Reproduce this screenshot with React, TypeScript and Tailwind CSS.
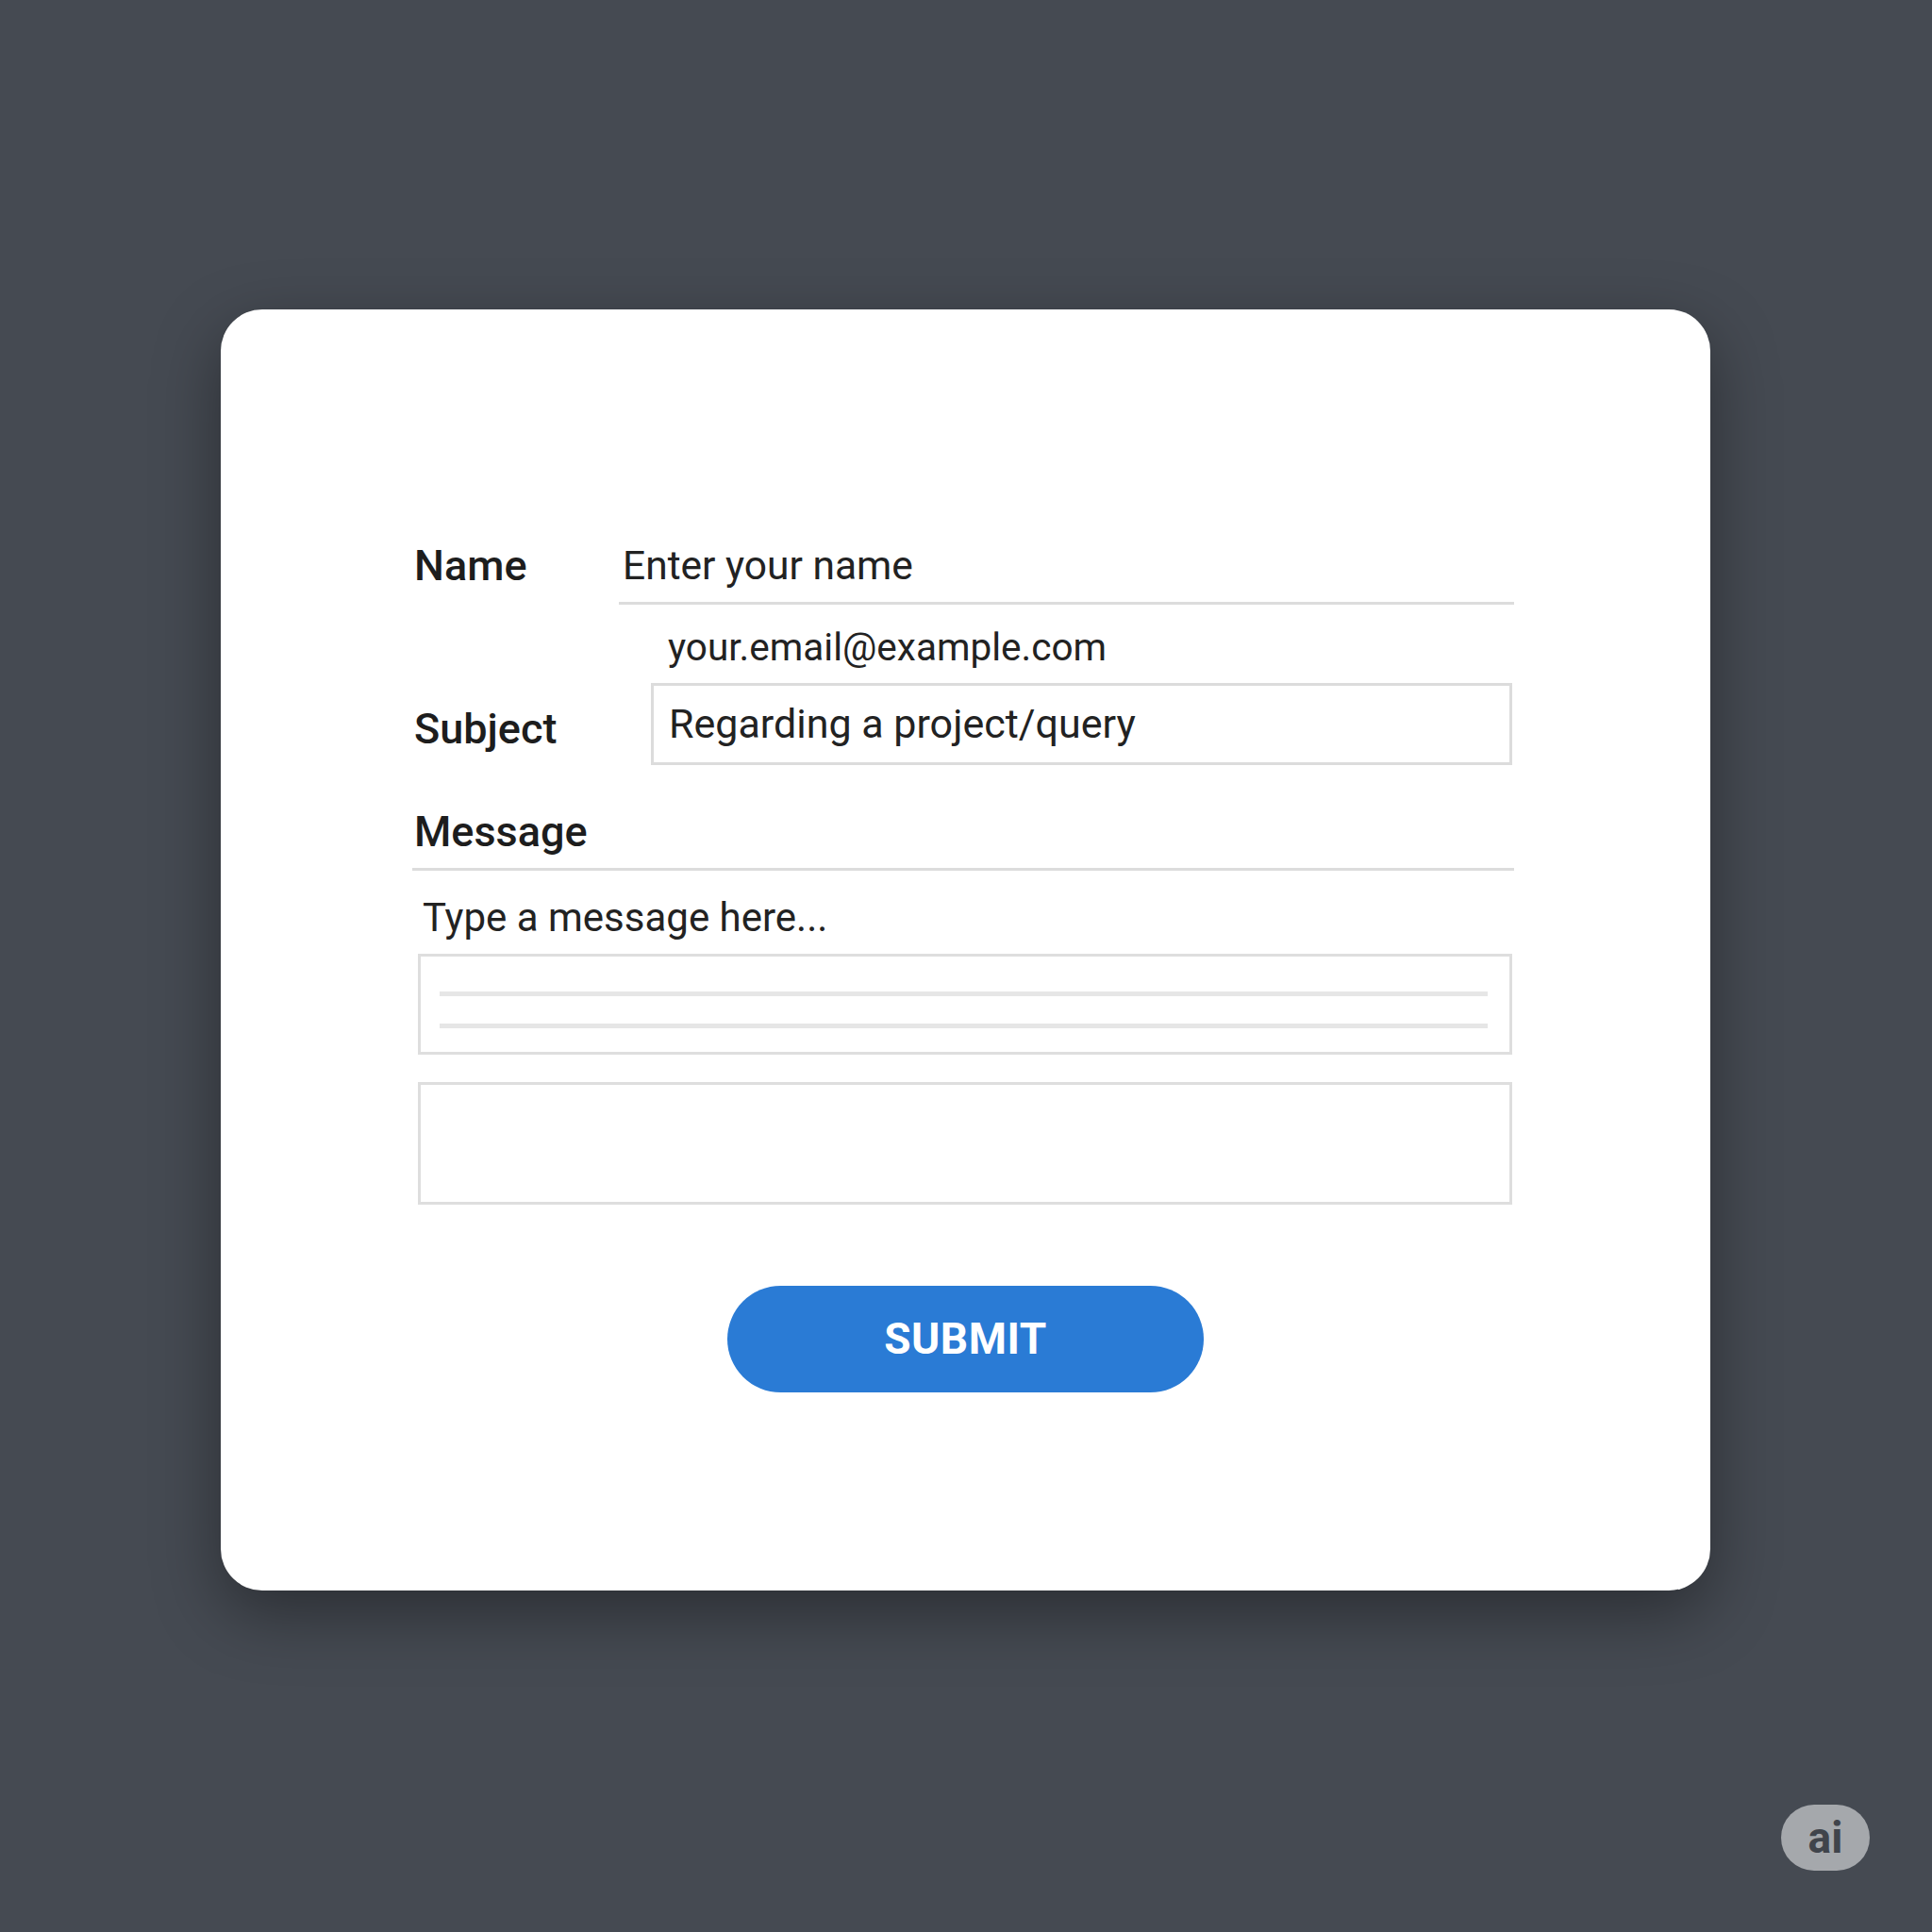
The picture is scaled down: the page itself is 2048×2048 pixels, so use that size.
export default function App() {
  return (
    <div className="relative w-[2048px] h-[2048px] bg-[#454a52] pt-[328px] pl-[234px] font-['Roboto',sans-serif]">
      {/* Card */}
      <div className="w-[1579px] h-[1358px] bg-white rounded-[44px] shadow-[0_24px_70px_rgba(0,0,0,0.38)] pt-[240px] pl-[203px]">
        <div className="w-[1168px] flex flex-col">
          {/* Name */}
          <div className="flex">
            <div className="w-[219px] h-[73px] flex items-center pb-[9px] pl-[2px] text-[45px] font-medium text-[#1d1d1d]">
              Name
            </div>
            <div className="w-[949px] h-[73px] flex items-center pb-[6px] pl-[4px] border-b-[3px] border-[#dcdcdc] text-[42.5px] text-[#222]">
              Enter your name
            </div>
          </div>

          {/* Email */}
          <div className="mt-[20px] h-[50px] flex items-center pl-[271px] text-[40.5px] text-[#222]">
            your.email@example.com
          </div>

          {/* Subject */}
          <div className="mt-[13px] flex items-center">
            <div className="w-[253px] pt-[10px] pl-[2px] text-[45px] font-medium text-[#1d1d1d]">
              Subject
            </div>
            <div className="w-[913px] h-[87px] border-[3px] border-[#dcdcdc] flex items-center pl-[16px] text-[43px] text-[#222]">
              Regarding a project/query
            </div>
          </div>

          {/* Message */}
          <div className="mt-[33px] h-[79px] flex items-center pl-[2px] border-b-[3px] border-[#dcdcdc] text-[45px] font-medium text-[#1d1d1d]">
            Message
          </div>
          <div className="mt-[24px] h-[50px] flex items-center pl-[11px] text-[42px] text-[#222]">
            Type a message here...
          </div>

          <div className="mt-[14px] ml-[6px] w-[1160px] h-[107px] border-[3px] border-[#dedede] flex flex-col gap-[29px] pt-[37px] pl-[20px] pr-[23px]">
            <div className="h-[5px] bg-[#e6e6e6]" />
            <div className="h-[5px] bg-[#e6e6e6]" />
          </div>

          <div className="mt-[29px] ml-[6px] w-[1160px] h-[130px] border-[3px] border-[#dedede]" />
        </div>

        {/* Submit */}
        <div className="mt-[86px] -ml-[203px] w-[1579px] flex justify-center">
          <button className="w-[505px] h-[113px] rounded-full bg-[#2a7bd5] text-white text-[46px] font-bold tracking-[0.5px]">
            SUBMIT
          </button>
        </div>
      </div>

      {/* badge */}
      <div className="absolute left-[1888px] top-[1913px] w-[94px] h-[70px] rounded-full bg-[#a5a8ac] flex items-center justify-center text-[46px] font-bold text-[#40444b]">
        ai
      </div>
    </div>
  );
}
